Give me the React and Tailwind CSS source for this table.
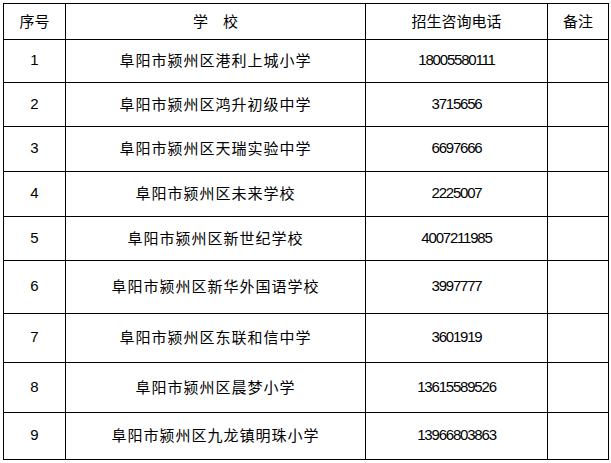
import React from "react";

const rows = [
  ["1", "阜阳市颍州区港利上城小学", "18005580111", "h-[43px]"],
  ["2", "阜阳市颍州区鸿升初级中学", "3715656", "h-[44px]"],
  ["3", "阜阳市颍州区天瑞实验中学", "6697666", "h-[45px]"],
  ["4", "阜阳市颍州区未来学校", "2225007", "h-[45px]"],
  ["5", "阜阳市颍州区新世纪学校", "4007211985", "h-[44px]"],
  ["6", "阜阳市颍州区新华外国语学校", "3997777", "h-[53px]"],
  ["7", "阜阳市颍州区东联和信中学", "3601919", "h-[49px]"],
  ["8", "阜阳市颍州区晨梦小学", "13615589526", "h-[50px]"],
  ["9", "阜阳市颍州区九龙镇明珠小学", "13966803863", "h-[47px]"],
];

const cjk = "font-['Noto_Sans_CJK_SC','Noto_Sans',sans-serif]";
const num = "font-['Liberation_Sans',Arial,sans-serif]";
const cell = "border-l border-t border-black flex items-center justify-center text-black pb-[1px]";

export default function App() {
  return (
    <div className="w-[611px] h-[463px] bg-white pt-[3px] pl-[3px]">
      <div className="grid grid-cols-[62px_300px_182px_61px] w-max border-r border-b border-black">
        <div className={`${cell} ${cjk} h-[36px] text-[15px]`}>序号</div>
        <div className={`${cell} ${cjk} h-[36px] text-[15px]`}>学　校</div>
        <div className={`${cell} ${cjk} h-[36px] text-[15px]`}>招生咨询电话</div>
        <div className={`${cell} ${cjk} h-[36px] text-[15px]`}>备注</div>
        {rows.map(([n, name, phone, h]) => (
          <React.Fragment key={n}>
            <div className={`${cell} ${num} ${h} text-[15px]`}>{n}</div>
            <div className={`${cell} ${cjk} ${h} text-[15px] tracking-[1px]`}>{name}</div>
            <div className={`${cell} ${num} ${h} text-[15px] tracking-[-1.2px]`}>{phone}</div>
            <div className={`${cell} ${h}`}></div>
          </React.Fragment>
        ))}
      </div>
    </div>
  );
}
